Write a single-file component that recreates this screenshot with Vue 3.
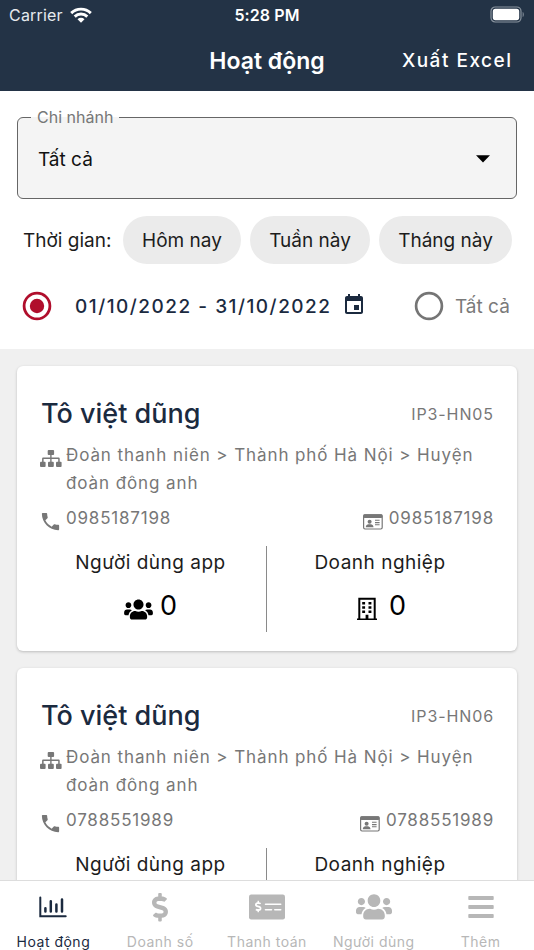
<script setup>
const periods = [
  { label: 'Hôm nay', cls: 'w1' },
  { label: 'Tuần này', cls: 'w2' },
  { label: 'Tháng này', cls: 'w3' },
]
const people = [
  { name: 'Tô việt dũng', code: 'IP3-HN05', phone: '0985187198' },
  { name: 'Tô việt dũng', code: 'IP3-HN06', phone: '0788551989' },
]
const orgLines = ['Đoàn thanh niên > Thành phố Hà Nội > Huyện', 'đoàn đông anh']
const usersPath = 'M96 224c35.3 0 64-28.7 64-64s-28.7-64-64-64-64 28.7-64 64 28.7 64 64 64zm448 0c35.3 0 64-28.7 64-64s-28.7-64-64-64-64 28.7-64 64 28.7 64 64 64zm32 32h-64c-17.6 0-33.5 7.1-45.1 18.6 40.3 22.1 68.9 62 75.1 109.4h66c17.7 0 32-14.3 32-32v-32c0-35.3-28.7-64-64-64zm-256 0c61.9 0 112-50.1 112-112S381.9 32 320 32 208 82.1 208 144s50.1 112 112 112zm76.8 32h-8.3c-20.8 10-43.9 16-68.5 16s-47.6-6-68.5-16h-8.3C179.6 288 128 339.6 128 403.2V432c0 26.5 21.5 48 48 48h288c26.5 0 48-21.5 48-48v-28.8c0-63.6-51.6-115.2-115.2-115.2zm-223.7-13.4C161.5 263.1 145.6 256 128 256H64c-35.3 0-64 28.7-64 64v32c0 17.7 14.3 32 32 32h65.9c6.3-47.4 34.9-87.3 75.2-109.4z'
</script>

<template>
  <div class="screen">
    <header class="top">
      <div class="status">
        <div class="carrier">
          <span>Carrier</span>
          <svg width="22" height="16" viewBox="0 0 22 16" fill="none" stroke="#fff" stroke-width="2.9">
            <path d="M1.2 6.1a14 14 0 0 1 19.6 0" />
            <path d="M4.7 9.6a9 9 0 0 1 12.6 0" />
            <path d="M11 15.8L7.5 12.2a5 5 0 0 1 7 0z" fill="#fff" stroke="none" />
          </svg>
        </div>
        <div class="clock">5:28 PM</div>
        <svg class="battery" width="35" height="17" viewBox="0 0 35 17">
          <rect x="1" y="1" width="30" height="15" rx="4.2" fill="none" stroke="#8b95a0" stroke-width="1.2" />
          <rect x="2.8" y="2.8" width="26.4" height="11.4" rx="2.6" fill="#fff" />
          <path d="M32.7 6v5c1.4-.5 1.4-4.5 0-5z" fill="#8b95a0" />
        </svg>
      </div>
      <div class="nav">
        <h1>Hoạt động</h1>
        <span class="export">Xuất Excel</span>
      </div>
    </header>

    <section class="filters">
      <fieldset class="select">
        <legend><span>Chi nhánh</span></legend>
        <div class="value">
          <span>Tất cả</span>
          <svg width="14" height="8" viewBox="0 0 14 8"><path d="M0 .2h14L7 7.4z" /></svg>
        </div>
      </fieldset>
      <div class="periods">
        <span class="plabel">Thời gian:</span>
        <button v-for="p in periods" :key="p.label" :class="['chip', p.cls]"><span>{{ p.label }}</span></button>
      </div>
      <div class="range">
        <svg width="30" height="30" viewBox="0 0 30 30">
          <circle cx="15" cy="15" r="12.9" fill="none" stroke="#b00e2c" stroke-width="2.8" />
          <circle cx="15" cy="15" r="7.2" fill="#b00e2c" />
        </svg>
        <span class="dates">01/10/2022 - 31/10/2022</span>
        <svg class="cal" width="24" height="24" viewBox="0 0 24 24" fill="#1b2a3f">
          <path d="M17 12h-5v5h5v-5zM16 1v2H8V1H6v2H5c-1.11 0-1.99.9-1.99 2L3 19c0 1.1.89 2 2 2h14c1.1 0 2-.9 2-2V5c0-1.1-.9-2-2-2h-1V1h-2zm3 18H5V8h14v11z" />
        </svg>
        <svg class="off" width="30" height="30" viewBox="0 0 30 30">
          <circle cx="15" cy="15" r="12.9" fill="none" stroke="#757575" stroke-width="2.7" />
        </svg>
        <span class="all">Tất cả</span>
      </div>
    </section>

    <main class="list">
      <article v-for="p in people" :key="p.code" class="card">
        <div class="head">
          <h2>{{ p.name }}</h2>
          <span class="code">{{ p.code }}</span>
        </div>
        <div class="org">
          <svg width="22" height="19" viewBox="0 0 22 19" fill="#777">
            <rect x="7.7" y="1" width="6.4" height="5" rx="1" />
            <path d="M10.2 5.5h1.4v3h7.2c.5 0 .9.4.9.9v4h-1.5V10h-6.6v3.4h-1.4V10H3.6v3.4H2.1v-4c0-.5.4-.9.9-.9h7.2z" />
            <rect x="0" y="12.8" width="5.6" height="5.2" rx="1" />
            <rect x="8" y="12.8" width="5.8" height="5.2" rx="1" />
            <rect x="16" y="12.8" width="5.6" height="5.2" rx="1" />
          </svg>
          <div class="orgtext"><div v-for="l in orgLines" :key="l">{{ l }}</div></div>
        </div>
        <div class="contact">
          <svg class="tel" width="23" height="23" viewBox="0 0 24 24" fill="#777">
            <path d="M6.62 10.79c1.44 2.83 3.76 5.14 6.59 6.59l2.2-2.2c.27-.27.67-.36 1.02-.24 1.12.37 2.33.57 3.57.57.55 0 1 .45 1 1V20c0 .55-.45 1-1 1-9.39 0-17-7.61-17-17 0-.55.45-1 1-1h3.5c.55 0 1 .45 1 1 0 1.25.2 2.45.57 3.57.11.35.03.74-.25 1.02l-2.2 2.2z" />
          </svg>
          <span class="num">{{ p.phone }}</span>
          <svg class="idc" width="20" height="16" viewBox="0 0 20 16">
            <rect x=".6" y=".8" width="18.6" height="14.2" rx="1.4" fill="#fff" stroke="#777" stroke-width="1.2" />
            <rect x=".4" y=".2" width="19" height="3.8" rx="1.2" fill="#777" />
            <circle cx="6.6" cy="7.7" r="2" fill="#777" />
            <path d="M2.8 13.2c0-2 1.4-3 2.6-3h2.4c1.2 0 2.7 1 2.7 3z" fill="#777" />
            <path d="M12 6.3h4.6M12 8.6h4.6M12 10.8h4.6" stroke="#777" stroke-width="1.1" />
          </svg>
          <span class="num">{{ p.phone }}</span>
        </div>
        <div class="stats">
          <div class="stat">
            <div class="slabel">Người dùng app</div>
            <div class="sval">
              <svg class="grp" width="29" height="23" viewBox="0 0 640 512"><path :d="usersPath" /></svg>
              <span>0</span>
            </div>
          </div>
          <div class="stat right">
            <div class="slabel two">Doanh nghiệp</div>
            <div class="sval">
              <svg class="bld" width="20" height="24" viewBox="0 0 20 24">
                <path d="M2.3 22V1.7h15.4V22" fill="none" stroke="#000" stroke-width="2" />
                <path d="M0 21.4h8.6v-3.6h2.8v3.6H20V23H0z" />
                <path d="M5.2 5h2.9v2.6H5.2zM11.5 5h2.9v2.6h-2.9zM5.2 9.2h2.9v2.6H5.2zM11.5 9.2h2.9v2.6h-2.9zM5.2 13.4h2.9V16H5.2zM11.5 13.4h2.9V16h-2.9z" />
              </svg>
              <span>0</span>
            </div>
          </div>
        </div>
      </article>
    </main>

    <nav class="tabs">
      <div class="tab active">
        <svg width="32" height="32" viewBox="0 0 32 32" fill="none" stroke="#1b2a3f" stroke-linecap="round" stroke-width="2.4">
          <path d="M3.3 6.4v18.8h25.4" stroke-width="2" />
          <path d="M8.4 17.2v3.2M13.8 10.2v10.2M19.4 13.4v7M25 8.4v12" stroke-width="2.5" />
        </svg>
        <span class="t1">Hoạt động</span>
      </div>
      <div class="tab">
        <svg width="32" height="32" viewBox="0 0 32 32" fill="#b7b7b7">
          <path transform="translate(8 2) scale(.0555)" d="M209.2 233.4l-108-31.6C88.7 198.2 80 186.5 80 173.5c0-16.3 13.2-29.5 29.5-29.5h66.3c12.2 0 24.2 3.7 34.2 10.5 6.1 4.1 14.3 3.1 19.5-2l34.8-34c7.1-6.9 6.1-18.4-1.8-24.5C238 74.8 207.4 64.1 176 64V16c0-8.8-7.2-16-16-16h-32c-8.8 0-16 7.2-16 16v48h-2.5C45.8 64-5.4 118.7.5 183.6c4.2 46.1 39.4 83.6 83.8 96.6l102.5 30c12.5 3.7 21.2 15.3 21.2 28.3 0 16.3-13.2 29.5-29.5 29.5h-66.3C100 368 88 364.3 78 357.5c-6.1-4.1-14.3-3.1-19.5 2l-34.8 34c-7.1 6.9-6.1 18.4 1.8 24.5 24.5 19.2 55.1 29.9 86.5 30v48c0 8.8 7.2 16 16 16h32c8.8 0 16-7.2 16-16v-48.2c46.6-.9 90.3-28.6 105.7-72.7 21.5-61.6-14.6-124.8-72.5-141.7z" />
        </svg>
        <span class="t2">Doanh số</span>
      </div>
      <div class="tab">
        <svg width="38" height="32" viewBox="0 0 38 32">
          <rect x="1" y="3.5" width="36" height="25" rx="2.2" fill="#b7b7b7" />
          <path transform="translate(7 9.8) scale(.0225)" fill="#fff" d="M209.2 233.4l-108-31.6C88.7 198.2 80 186.5 80 173.5c0-16.3 13.2-29.5 29.5-29.5h66.3c12.2 0 24.2 3.7 34.2 10.5 6.1 4.1 14.3 3.1 19.5-2l34.8-34c7.1-6.9 6.1-18.4-1.8-24.5C238 74.8 207.4 64.1 176 64V16c0-8.8-7.2-16-16-16h-32c-8.8 0-16 7.2-16 16v48h-2.5C45.8 64-5.4 118.7.5 183.6c4.2 46.1 39.4 83.6 83.8 96.6l102.5 30c12.5 3.7 21.2 15.3 21.2 28.3 0 16.3-13.2 29.5-29.5 29.5h-66.3C100 368 88 364.3 78 357.5c-6.1-4.1-14.3-3.1-19.5 2l-34.8 34c-7.1 6.9-6.1 18.4 1.8 24.5 24.5 19.2 55.1 29.9 86.5 30v48c0 8.8 7.2 16 16 16h32c8.8 0 16-7.2 16-16v-48.2c46.6-.9 90.3-28.6 105.7-72.7 21.5-61.6-14.6-124.8-72.5-141.7z" />
          <path d="M17.5 13.3h15.2M17.5 18.8h6M26.8 18.8h5.9" stroke="#fff" stroke-width="1.6" stroke-linecap="round" />
        </svg>
        <span class="t3">Thanh toán</span>
      </div>
      <div class="tab">
        <svg width="36" height="32" viewBox="0 -28 640 569" fill="#b7b7b7"><path :d="usersPath" /></svg>
        <span class="t4">Người dùng</span>
      </div>
      <div class="tab">
        <svg width="32" height="32" viewBox="0 0 32 32" fill="#b7b7b7">
          <rect x="3.3" y="5" width="25.4" height="4" rx=".8" />
          <rect x="3.3" y="14" width="25.4" height="4" rx=".8" />
          <rect x="3.3" y="23" width="25.4" height="4" rx=".8" />
        </svg>
        <span class="t5">Thêm</span>
      </div>
    </nav>
  </div>
</template>

<style>
body { margin: 0; overflow: hidden; }
</style>
<style scoped>
.screen { width: 534px; height: 950px; display: flex; flex-direction: column; overflow: hidden; background: #fff; font-family: Inter, "Liberation Sans", sans-serif; color: #1c1c1c; white-space: nowrap; }
.screen * { box-sizing: border-box; }
h1, h2 { margin: 0; }
svg { display: block; flex: none; }
.top { flex: none; height: 91px; background: #233346; color: #fff; }
.status { height: 30px; display: grid; grid-template-columns: 1fr auto 1fr; align-items: center; padding: 0 9px 0 9px; font-size: 16px; }
.carrier { display: flex; align-items: center; gap: 7px; color: #e6eaee; letter-spacing: 0.2px; }
.clock { font-weight: 600; letter-spacing: 0.1px; }
.battery { justify-self: end; margin-top: -2px; }
.nav { height: 61px; display: grid; grid-template-columns: 1fr auto 1fr; align-items: center; padding: 0 23px; }
h1 { grid-column: 2; font-size: 23px; font-weight: 600; line-height: 30px; }
.export { justify-self: end; font-size: 19px; font-weight: 500; letter-spacing: 1.5px; margin-right: -1.5px; }
.filters { flex: none; height: 258px; padding: 16px 17px 0; }
.select { margin: 0; height: 92px; padding: 0 26px 0 20px; border: 1.5px solid #666; border-radius: 6px; background: #f4f4f4; min-width: 0; }
legend { height: 20px; line-height: 20px; font-size: 16px; color: #777; padding: 0 6px; margin-left: -7px; }
.value { height: 64px; display: flex; align-items: center; justify-content: space-between; font-size: 19px; color: #111; }
.periods { display: flex; align-items: center; margin-top: 17px; height: 48px; padding-left: 6px; font-size: 19px; }
.plabel { width: 100px; flex: none; }
.chip { height: 48px; flex: none; border: 0; border-radius: 24px; background: #ebebeb; font: inherit; color: inherit; padding: 0; margin-right: 9px; }
.w1 { width: 118px; }
.w2 { width: 120px; }
.w3 { width: 133px; }
.range { display: flex; align-items: center; height: 48px; margin-top: 18px; padding-left: 5px; }
.dates { width: 264px; margin-left: 23px; font-size: 19px; font-weight: 500; letter-spacing: 1.5px; color: #1b2a3f; }
.cal { margin-left: 3px; margin-top: -2px; }
.off { margin-left: 48px; }
.all { margin-left: 11px; font-size: 19px; color: #7a7a7a; }
.list { flex: 1; min-height: 0; overflow: hidden; background: #f0f0f0; padding: 17px 17px 0; }
.card { height: 285px; margin-bottom: 17px; background: #fff; border-radius: 6px; box-shadow: 0 1px 3px rgba(0,0,0,.22); padding: 30px 24px 0; }
.head { display: flex; justify-content: space-between; align-items: center; height: 36px; }
h2 { font-size: 27px; font-weight: 500; color: #1b2a3f; line-height: 36px; }
.code { font-size: 16px; letter-spacing: 0.9px; color: #777; margin-right: -1px; }
.org { display: flex; gap: 4px; margin-top: 9px; margin-left: -1px; color: #777; }
.org svg { margin-top: 8px; }
.orgtext { font-size: 17px; line-height: 28px; letter-spacing: 0.9px; }
.contact { display: flex; align-items: center; height: 24px; margin-top: 9px; color: #777; }
.tel { margin: 7px 4px 0 -2px; }
.num { font-size: 17px; letter-spacing: 0.8px; margin-right: -1px; }
.idc { margin: 7px 6px 0 auto; }
.stats { display: grid; grid-template-columns: 1fr 1fr; margin-top: 16px; height: 82px; }
.stat { text-align: center; padding: 2px 6px 0 0; border-right: 1.5px solid #8a8a8a; }
.right { border: 0; padding-right: 0; }
.slabel { height: 30px; line-height: 30px; font-size: 19px; letter-spacing: 0.5px; }
.sval { display: flex; justify-content: center; height: 54px; align-items: center; font-size: 27px; color: #000; }
.grp { margin: 8px 7px 0 0; }
.bld { margin: 8px 12px 0 3px; }
.tabs { flex: none; height: 70px; border-top: 1px solid #ddd; background: #fff; display: grid; grid-template-columns: repeat(5, 1fr); color: #b7b7b7; }
.tab { display: flex; flex-direction: column; align-items: center; padding-top: 10px; font-size: 14px; letter-spacing: 0.5px; }
.tab span { line-height: 20px; margin-top: 9px; }
.active { color: #1b2a3f; }
</style>
